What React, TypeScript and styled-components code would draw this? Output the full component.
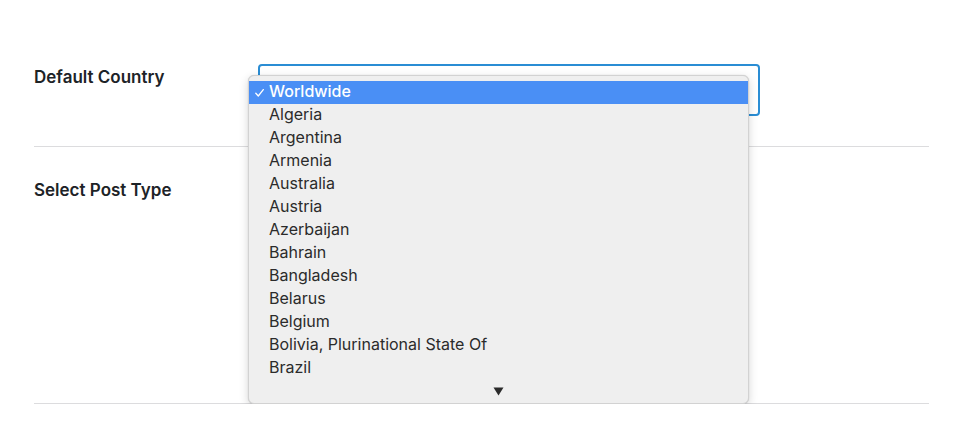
import React from "react";
import styled, { createGlobalStyle } from "styled-components";

const GlobalStyle = createGlobalStyle`
  html, body {
    margin: 0;
    padding: 0;
    background: #ffffff;
  }
  body {
    font-family: Inter, "Liberation Sans", Arial, sans-serif;
    color: #1d2327;
  }
`;

const Page = styled.div`
  padding: 0 31px 0 34px;
`;

const FormRow = styled.div<{ $padTop: number; $minHeight: number }>`
  display: grid;
  grid-template-columns: 224px 1fr;
  align-items: start;
  padding-top: ${({ $padTop }) => $padTop}px;
  min-height: ${({ $minHeight }) => $minHeight}px;
  box-sizing: border-box;
  border-bottom: 1px solid #dcdcde;
`;

const Label = styled.div<{ $offset: number }>`
  font-size: 17px;
  font-weight: 600;
  line-height: 20px;
  margin-top: ${({ $offset }) => $offset}px;
  color: #1d2327;
`;

const Field = styled.div`
  position: relative;
  width: 502px;
`;

const SelectBox = styled.div`
  height: 52px;
  box-sizing: border-box;
  border: 2px solid #2a8dd4;
  border-radius: 4px;
  background: #fff;
`;

const Menu = styled.ul`
  position: absolute;
  left: -10px;
  top: 11px;
  width: 501px;
  margin: 0;
  padding: 5px 0 0;
  list-style: none;
  box-sizing: border-box;
  background: #efefef;
  border: 1px solid #d2d2d2;
  border-radius: 6px;
  box-shadow: 0 3px 10px rgba(0, 0, 0, 0.16), 0 0 1px rgba(0, 0, 0, 0.2);
  overflow: hidden;
  z-index: 5;
`;

const Option = styled.li<{ $selected?: boolean }>`
  display: flex;
  align-items: center;
  height: 23px;
  box-sizing: border-box;
  padding: 0 0 3px 20px;
  position: relative;
  font-size: 16px;
  font-weight: ${({ $selected }) => ($selected ? 500 : 400)};
  color: ${({ $selected }) => ($selected ? "#ffffff" : "#2b2b2b")};
  background: ${({ $selected }) => ($selected ? "#4a8ff5" : "transparent")};
`;

const Check = styled.svg`
  position: absolute;
  left: 6px;
  top: 8px;
`;

const ScrollArrow = styled.div`
  height: 23px;
  display: flex;
  align-items: center;
  justify-content: center;
  color: #2b2b2b;
`;

const countries = [
  "Worldwide",
  "Algeria",
  "Argentina",
  "Armenia",
  "Australia",
  "Austria",
  "Azerbaijan",
  "Bahrain",
  "Bangladesh",
  "Belarus",
  "Belgium",
  "Bolivia, Plurinational State Of",
  "Brazil",
];

export default function App() {
  return (
    <>
      <GlobalStyle />
      <Page>
        <FormRow $padTop={64} $minHeight={147}>
          <Label $offset={3}>Default Country</Label>
          <Field>
            <SelectBox />
            <Menu>
              {countries.map((c, i) => (
                <Option key={c} $selected={i === 0}>
                  {i === 0 && (
                    <Check width="9" height="8" viewBox="0 0 9 8">
                      <path
                        d="M0.8 4.2 L3.3 7 L8.3 0.6"
                        fill="none"
                        stroke="#fff"
                        strokeWidth="1.3"
                        strokeLinecap="round"
                        strokeLinejoin="round"
                      />
                    </Check>
                  )}
                  {c}
                </Option>
              ))}
              <ScrollArrow>
                <svg width="11" height="9" viewBox="0 0 11 9">
                  <path d="M0.5 0.5 H10.5 L5.5 8.5 Z" fill="#2b2b2b" />
                </svg>
              </ScrollArrow>
            </Menu>
          </Field>
        </FormRow>
        <FormRow $padTop={32} $minHeight={257}>
          <Label $offset={1}>Select Post Type</Label>
          <div />
        </FormRow>
      </Page>
    </>
  );
}
